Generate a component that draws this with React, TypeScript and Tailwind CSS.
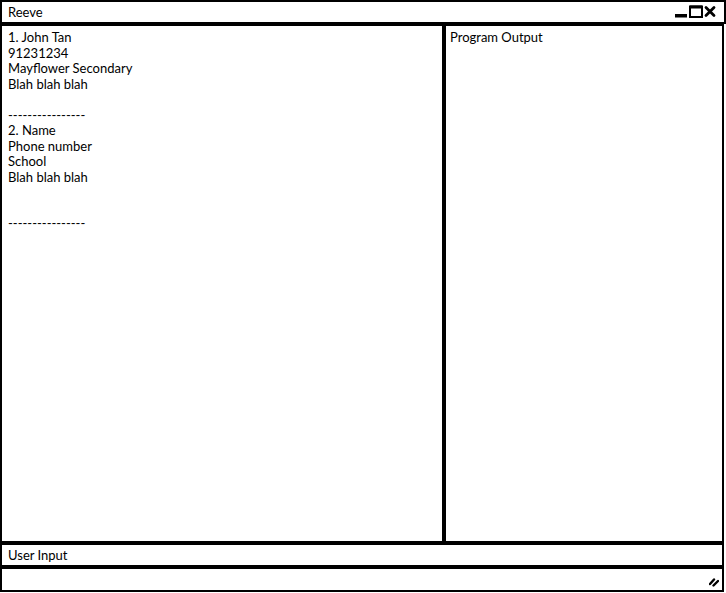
import React from 'react';

const font = { fontFamily: 'Lato, "Open Sans", sans-serif' };

const contacts = `1. John Tan
91231234
Mayflower Secondary
Blah blah blah

----------------
2. Name
Phone number
School
Blah blah blah


----------------`;

const WindowControls: React.FC = () => (
  <svg width="44" height="14" viewBox="0 0 44 14" className="text-black">
    <rect x="0" y="9" width="12" height="3.5" fill="currentColor" />
    <rect x="15" y="1.5" width="12" height="10.5" fill="none" stroke="currentColor" strokeWidth="2" />
    <rect x="15" y="0.5" width="12" height="3" fill="currentColor" />
    <path d="M31 2.5 L39 10.5 M39 2.5 L31 10.5" stroke="currentColor" strokeWidth="2.8" strokeLinecap="round" />
  </svg>
);

const ResizeHandle: React.FC = () => (
  <svg width="10" height="10" viewBox="0 0 10 10">
    <path d="M1 7 L5 2.5 M4.5 8.5 L9 4" stroke="black" strokeWidth="2.4" strokeLinecap="round" />
  </svg>
);

export default function App() {
  return (
    <div className="w-[726px] h-[593px] bg-white flex flex-col text-[13px] text-black" style={font}>
      <div className="h-[24px] border-2 border-black flex items-center justify-between pl-[6px] pr-[5px]">
        <span className="leading-none">Reeve</span>
        <WindowControls />
      </div>
      <div className="h-[519px] flex">
        <div className="w-[444px] border-2 border-black pl-[6px] pt-[4px]">
          <pre className="whitespace-pre leading-[15.5px]" style={font}>{contacts}</pre>
        </div>
        <div className="w-[280px] border-2 border-black pl-[4px] pt-[4px]">
          <div className="leading-[15.5px]">Program Output</div>
        </div>
      </div>
      <div className="w-[724px] h-[24px] border-2 border-black flex items-center pl-[6px]">
        <span className="leading-none">User Input</span>
      </div>
      <div className="w-[724px] h-[25px] border-2 border-black flex items-end justify-end pr-[3px] pb-[3px]">
        <ResizeHandle />
      </div>
    </div>
  );
}
